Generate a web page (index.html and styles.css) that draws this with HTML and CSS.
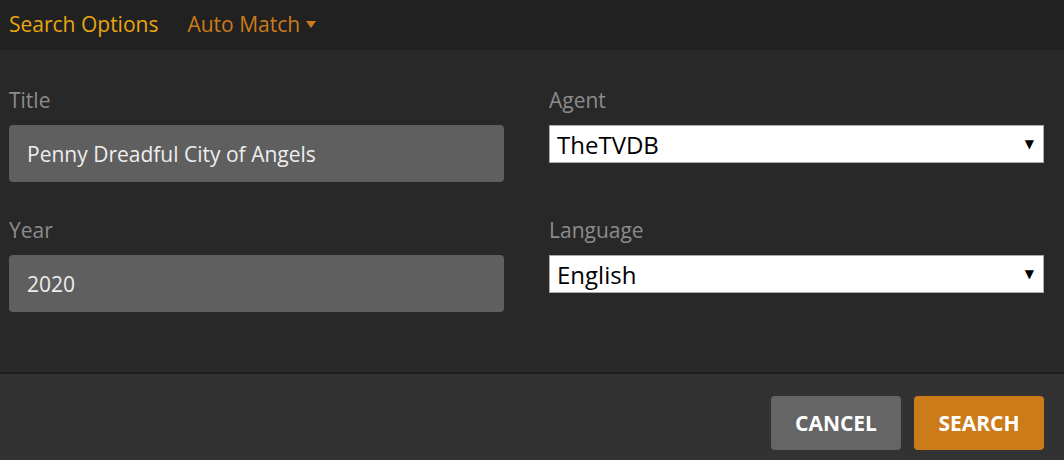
FILE: index.html
```html
<!DOCTYPE html>
<html>
<head>
<meta charset="utf-8">
<link rel="stylesheet" href="styles.css">
</head>
<body>
<div class="modal">
  <div class="header">
    <span class="tab active">Search Options</span>
    <span class="tab dropdown">Auto Match <span class="caret"></span></span>
  </div>
  <div class="content">
    <div class="group">
      <div class="label">Title</div>
      <div class="input">Penny Dreadful City of Angels</div>
    </div>
    <div class="group">
      <div class="label">Agent</div>
      <div class="select"><span>TheTVDB</span><span class="arrow">▼</span></div>
    </div>
    <div class="group">
      <div class="label">Year</div>
      <div class="input">2020</div>
    </div>
    <div class="group">
      <div class="label">Language</div>
      <div class="select"><span>English</span><span class="arrow">▼</span></div>
    </div>
  </div>
  <div class="footer">
    <div class="btn cancel">Cancel</div>
    <div class="btn search">Search</div>
  </div>
</div>
</body>
</html>
```
FILE: styles.css
```css
html, body {
  margin: 0;
  padding: 0;
  background: #282828;
  font-family: "Open Sans", "Liberation Sans", sans-serif;
}
.modal {
  width: 1064px;
  height: 460px;
  display: flex;
  flex-direction: column;
}
.header {
  height: 50px;
  background: #212121;
  display: flex;
  align-items: center;
  padding-left: 9px;
  gap: 29px;
  font-size: 21px;
  box-sizing: border-box;
  padding-bottom: 2px;
}
.tab.active { color: #e9a60f; }
.tab.dropdown {
  color: #cc7b19;
  display: flex;
  align-items: center;
  gap: 6px;
}
.caret {
  width: 0;
  height: 0;
  border-left: 5px solid transparent;
  border-right: 5px solid transparent;
  border-top: 7px solid #cc7b19;
  margin-top: 1px;
}
.content {
  display: grid;
  grid-template-columns: 495px 495px;
  grid-template-rows: auto auto;
  align-items: start;
  column-gap: 45px;
  row-gap: 34px;
  align-content: start;
  padding: 36px 20px 0 9px;
  height: 322px;
  box-sizing: border-box;
  background: #282828;
}
.group {
  display: flex;
  flex-direction: column;
}
.label {
  color: #8c8c8c;
  font-size: 21px;
  line-height: 28px;
  margin-bottom: 11px;
}
.input {
  height: 57px;
  background: #5f5f5f;
  border-radius: 4px;
  color: #eeeeee;
  font-size: 21px;
  display: flex;
  align-items: center;
  padding-left: 18px;
  box-sizing: border-box;
}
.select {
  height: 38px;
  background: #ffffff;
  border: 1px solid #a9a9a9;
  box-sizing: border-box;
  display: flex;
  align-items: center;
  justify-content: space-between;
  padding: 0 9px 0 7px;
  font-size: 24px;
  color: #000;
}
.select .arrow {
  font-size: 12px;
  font-family: "DejaVu Sans", sans-serif;
}
.footer {
  flex: 1;
  background: #323232;
  border-top: 2px solid #1e1e1e;
  display: flex;
  justify-content: flex-end;
  align-items: flex-start;
  gap: 13px;
  padding: 22px 20px 0 0;
}
.btn {
  width: 130px;
  height: 54px;
  border-radius: 4px;
  color: #ffffff;
  font-weight: 700;
  font-size: 21px;
  text-transform: uppercase;
  display: flex;
  align-items: center;
  justify-content: center;
}
.btn.cancel { background: #656565; }
.btn.search { background: #cc7b19; }
```
